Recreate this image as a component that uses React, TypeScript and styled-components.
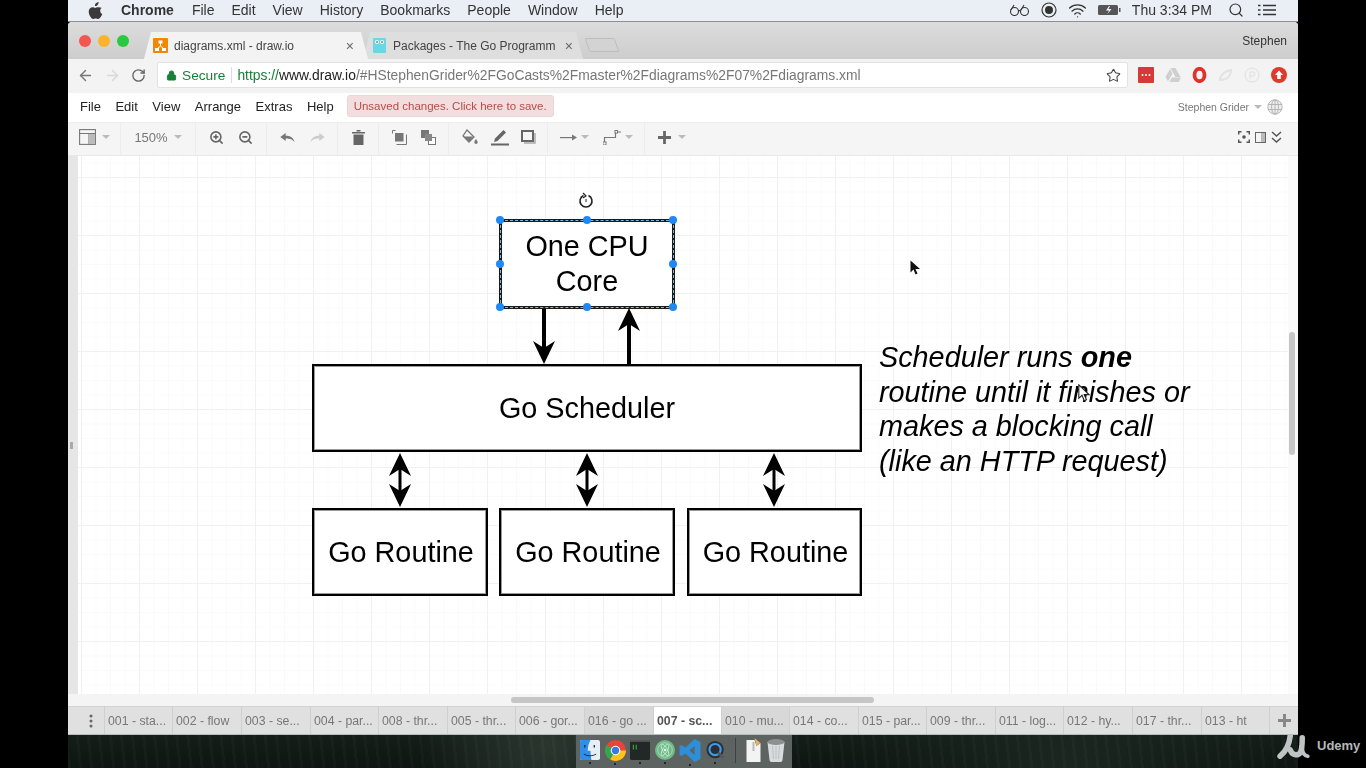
import React from "react";
import styled, { createGlobalStyle } from "styled-components";
import { ArrowLeft, ArrowRight, Lock, RotateCw, Search, Star, Wifi, ZoomIn, ZoomOut } from "lucide-react";

const SANS = `"Liberation Sans", Arial, sans-serif`;

const MENU_ITEMS = ["File", "Edit", "View", "History", "Bookmarks", "People", "Window", "Help"];
const APP_MENU = ["File", "Edit", "View", "Arrange", "Extras", "Help"];
const SHEETS = [
  { label: "001 - sta...", width: 68 },
  { label: "002 - flow", width: 69 },
  { label: "003 - se...", width: 69 },
  { label: "004 - par...", width: 68 },
  { label: "008 - thr...", width: 69 },
  { label: "005 - thr...", width: 68 },
  { label: "006 - gor...", width: 69 },
  { label: "016 - go ...", width: 69, shade: true },
  { label: "007 - sc...", width: 68, active: true },
  { label: "010 - mu...", width: 68, shade: true },
  { label: "014 - co...", width: 69 },
  { label: "015 - par...", width: 68 },
  { label: "009 - thr...", width: 69 },
  { label: "011 - log...", width: 68 },
  { label: "012 - hy...", width: 69 },
  { label: "017 - thr...", width: 69 },
  { label: "013 - ht", width: 68 },
];

const Caret = () => <CaretMark />;

const Arrow = ({ x, y1, y2, weight = 4 }: { x: number; y1: number; y2: number; weight?: number }) => {
  // tip sits on y2, the head always points from y1 towards y2
  const dir = y2 > y1 ? 1 : -1;
  const back = y2 - dir * 23;
  const notch = y2 - dir * 16;
  return (
    <g>
      <line x1={x} y1={y1} x2={x} y2={notch} stroke="#000" strokeWidth={weight} />
      <path d={`M${x} ${y2}L${x - 11} ${back}L${x} ${notch}L${x + 11} ${back}Z`} fill="#000" />
    </g>
  );
};

const App: React.FC = () => {
  return (
    <Screen>
      <GlobalStyle />
      <Frame>
        <MenuBar>
          <svg width="15" height="17" viewBox="0 0 15 17" fill="#3a3a3a">
            <path d="M10.6 0c.1 1.100-.3 2.100-1 2.900-.7.800-1.700 1.300-2.700 1.200-.1-1 .4-2.100 1-2.800C8.600.6 9.700.1 10.600 0zM13.900 5.800c-1.100.7-1.700 1.700-1.700 3 0 1.400.8 2.600 2.100 3.200-.4 1.100-.9 2.100-1.600 3.100-.8 1.100-1.500 1.900-2.500 1.900s-1.400-.6-2.600-.6c-1.200 0-1.600.6-2.500.6-1 0-1.700-.9-2.500-2C1.500 13.500.7 11.600.7 9.800c0-3 2-4.600 3.900-4.600 1 0 1.900.7 2.600.7.600 0 1.600-.7 2.700-.7 1.500 0 2.900.6 4 .6z" />
          </svg>
          <AppName>Chrome</AppName>
          <MenuList>
            {MENU_ITEMS.map((item) => (
              <span key={item}>{item}</span>
            ))}
          </MenuList>
          <StatusArea>
            <svg width="21" height="12" viewBox="0 0 21 12" fill="none" stroke="#333" strokeWidth="1.100">
              <circle cx="5.500" cy="7.500" r="4" />
              <circle cx="15.500" cy="7.500" r="4" />
              <path d="M9.500 7q1-1 2 0M2 6l3-5M12 6l3-5" />
            </svg>
            <svg width="16" height="16" viewBox="0 0 16 16">
              <circle cx="8" cy="8" r="7" fill="none" stroke="#333" strokeWidth="1.200" />
              <circle cx="8" cy="8" r="4" fill="#333" />
            </svg>
            <Wifi size={19} color="#333" strokeWidth={1.600} />
            <svg width="23" height="12" viewBox="0 0 23 12">
              <rect x="0" y="1" width="20" height="10" rx="1.500" fill="#555" />
              <rect x="21" y="4" width="1.500" height="4" fill="#555" />
              <path d="M11 2l-3 4.500h3L9.500 10l4-5h-3L12 2z" fill="#eef2f6" />
            </svg>
            <Clock>Thu 3:34 PM</Clock>
            <SpotlightIcon size={16} color="#333" strokeWidth={1.800} />
            <svg width="18" height="12" viewBox="0 0 18 12" stroke="#333" strokeWidth="1.500">
              <path d="M5 1.500h13M5 6h13M5 10.500h13M0 1.500h2.500M0 6h2.500M0 10.500h2.500" />
            </svg>
          </StatusArea>
        </MenuBar>

        <BrowserWindow>
          <TabStrip>
            <Traffic>
              <Light $color="#f5554f" />
              <Light $color="#fbb32e" />
              <Light $color="#28c840" />
            </Traffic>
            <BrowserTab $active>
              <svg width="15" height="15" viewBox="0 0 15 15">
                <rect width="15" height="15" rx="1" fill="#f08705" />
                <path d="M7.500 5v3M7.500 8L4 11M7.500 8l3.500 3" stroke="#fff" strokeWidth="1" fill="none" />
                <rect x="5.500" y="2.500" width="4" height="3" fill="#fff" />
                <rect x="2" y="10" width="4" height="3" fill="#fff" />
                <rect x="9" y="10" width="4" height="3" fill="#fff" />
              </svg>
              <TabTitle>diagrams.xml - draw.io</TabTitle>
              <TabClose>×</TabClose>
            </BrowserTab>
            <BrowserTab>
              <svg width="15" height="15" viewBox="0 0 15 15">
                <rect x="1" y="0" width="13" height="15" rx="1" fill="#6ad7e5" />
                <circle cx="5" cy="4" r="2" fill="#fff" />
                <circle cx="10" cy="4" r="2" fill="#fff" />
                <circle cx="5" cy="4" r="0.800" fill="#222" />
                <circle cx="10" cy="4" r="0.800" fill="#222" />
              </svg>
              <TabTitle>Packages - The Go Programm</TabTitle>
              <TabClose>×</TabClose>
            </BrowserTab>
            <NewTab />
            <ProfileName>Stephen</ProfileName>
          </TabStrip>

          <AddressRow>
            <NavButtons>
              <ArrowLeft size={17} color="#777" strokeWidth={2} />
              <ArrowRight size={17} color="#d8d8d8" strokeWidth={2} />
              <RotateCw size={15} color="#666" strokeWidth={2.200} />
            </NavButtons>
            <Omnibox>
              <Lock size={11} color="#188038" fill="#188038" />
              <SecureLabel>Secure</SecureLabel>
              <UrlDivider />
              <Url>
                <Scheme>https://</Scheme>
                <Host>www.draw.io</Host>
                /#HStephenGrider%2FGoCasts%2Fmaster%2Fdiagrams%2F07%2Fdiagrams.xml
              </Url>
              <Star size={15} color="#444" strokeWidth={1.700} />
            </Omnibox>
            <Extensions>
              <svg width="16" height="16" viewBox="0 0 16 16">
                <rect width="16" height="16" rx="1" fill="#d73a36" />
                <circle cx="4.500" cy="8" r="1" fill="#fff" />
                <circle cx="8" cy="8" r="1" fill="#fff" />
                <circle cx="11.500" cy="8" r="1" fill="#fff" />
              </svg>
              <svg width="16" height="14" viewBox="0 0 16 14">
                <path d="M5.500 0h5l5 9h-5zM5 1l2.500 4.500L3 13.500 0.500 9zM4.500 14l2.500-4.500h9L13.500 14z" fill="#cfcfcf" />
              </svg>
              <svg width="15" height="16" viewBox="0 0 15 16">
                <ellipse cx="7.500" cy="8" rx="5" ry="6.200" fill="none" stroke="#e0312e" strokeWidth="3.800" />
              </svg>
              <svg width="15" height="15" viewBox="0 0 15 15" fill="none" stroke="#e2e2e2" strokeWidth="2">
                <path d="M2 12C2 7 7 3 13 2 13 8 9 12 2 12z" />
              </svg>
              <svg width="16" height="16" viewBox="0 0 16 16" fill="none" stroke="#dedede" strokeWidth="1">
                <circle cx="8" cy="8" r="7" />
                <path d="M6 12V5h3a2 2 0 010 4H6" />
              </svg>
              <svg width="16" height="16" viewBox="0 0 16 16">
                <circle cx="8" cy="8" r="8" fill="#dd3b2c" />
                <path d="M8 3.500L12 8H9.800v4H6.200V8H4z" fill="#fff" />
              </svg>
            </Extensions>
          </AddressRow>

          <AppMenuRow>
            <AppMenuList>
              {APP_MENU.map((item) => (
                <span key={item}>{item}</span>
              ))}
            </AppMenuList>
            <SaveNotice>Unsaved changes. Click here to save.</SaveNotice>
            <UserBox>
              Stephen Grider
              <Caret />
              <svg width="16" height="16" viewBox="0 0 16 16" fill="#eee" stroke="#aaa" strokeWidth="0.800">
                <circle cx="8" cy="8" r="7.200" />
                <ellipse cx="8" cy="8" rx="3.500" ry="7.200" fill="none" />
                <path d="M1 5.500h14M1 10.500h14M8 1v14" fill="none" />
              </svg>
            </UserBox>
          </AppMenuRow>

          <ToolBar>
            <ToolGroup $width={53}>
              <svg width="17" height="16" viewBox="0 0 17 16" fill="none" stroke="#777" strokeWidth="1.100">
                <rect x="0.600" y="0.600" width="15.800" height="14.800" />
                <path d="M0.600 4.500h15.800M10 4.500v11" />
                <rect x="10" y="5" width="6" height="10" fill="#bbb" stroke="none" />
              </svg>
              <Caret />
            </ToolGroup>
            <ToolGroup $width={75}>
              <ZoomLabel>150%</ZoomLabel>
              <Caret />
            </ToolGroup>
            <ToolGroup $width={71} $gap={14}>
              <ZoomIn size={15} color="#666" strokeWidth={2.600} />
              <ZoomOut size={15} color="#666" strokeWidth={2.600} />
            </ToolGroup>
            <ToolGroup $width={71} $gap={15}>
              <svg width="15" height="9" viewBox="0 0 16 10" fill="#777">
                <path d="M0 4.500L6 0v3c5 0 8.500 2 10 7-2.500-3-5-4-10-4v3z" />
              </svg>
              <svg width="15" height="9" viewBox="0 0 16 10" fill="#ccc">
                <path d="M16 4.500L10 0v3C5 3 1.500 5 0 10c2.500-3 5-4 10-4v3z" />
              </svg>
            </ToolGroup>
            <ToolGroup $width={41}>
              <svg width="13" height="15" viewBox="0 0 13 15" fill="#666">
                <path d="M0 2h13v1.500H0zM4.500 0h4v1.500h-4zM1.500 4.500h10V15h-10z" />
              </svg>
            </ToolGroup>
            <ToolGroup $width={70} $gap={14}>
              <svg width="15" height="15" viewBox="0 0 15 15" fill="none" stroke="#777">
                <path d="M4.500 14.500h10V4.500M0.500 0.500h3M0.500 0.500v3" />
                <rect x="3" y="3" width="8.500" height="8.500" fill="#777" stroke="none" />
              </svg>
              <svg width="15" height="15" viewBox="0 0 15 15" fill="none" stroke="#777">
                <rect x="0.500" y="0.500" width="7" height="7" fill="#777" />
                <rect x="7.500" y="7.500" width="7" height="7" fill="#fff" />
                <rect x="4" y="4" width="7" height="7" fill="#888" stroke="none" />
              </svg>
            </ToolGroup>
            <ToolGroup $width={99} $gap={12}>
              <svg width="18" height="17" viewBox="0 0 18 17" fill="#777">
                <path d="M6 1l7 7-5 5-6-6z" fill="none" stroke="#777" strokeWidth="1.300" />
                <path d="M2.500 7.500h10L8 13zM15 10c1 1.500 1.700 2.300 1.700 3.200a1.700 1.700 0 01-3.400 0c0-.9.700-1.700 1.700-3.200z" />
              </svg>
              <svg width="18" height="17" viewBox="0 0 18 17">
                <path d="M12.500 1l2.500 2.500L6.500 12 3 13l1-3.500z" fill="#666" />
                <rect x="0" y="14.500" width="18" height="2" fill="#666" />
              </svg>
              <svg width="15" height="14" viewBox="0 0 15 14" fill="none">
                <rect x="1" y="1" width="11" height="10" stroke="#666" strokeWidth="2" />
                <path d="M14 3v10H3" stroke="#aaa" strokeWidth="1.500" />
              </svg>
            </ToolGroup>
            <ToolGroup $width={97} $gap={4}>
              <svg width="17" height="7" viewBox="0 0 17 7" fill="#777">
                <rect y="3" width="12" height="1.200" />
                <path d="M12 0.500l5 3-5 3z" />
              </svg>
              <Caret />
              <Spacer />
              <svg width="18" height="15" viewBox="0 0 18 15" fill="none" stroke="#777" strokeWidth="1.200">
                <path d="M1.500 13V7.500h11V2H18" />
                <rect x="0" y="12" width="3" height="3" fill="#fff" stroke="#777" strokeWidth="1" />
                <rect x="12" y="0.500" width="2.500" height="2.500" fill="#fff" stroke="#777" strokeWidth="1" />
              </svg>
              <Caret />
            </ToolGroup>
            <ToolGroup $width={54} $gap={7} $plain>
              <svg width="13" height="13" viewBox="0 0 14 14" fill="#666">
                <path d="M5.500 0h3v5.500H14v3H8.500V14h-3V8.500H0v-3h5.500z" />
              </svg>
              <Caret />
            </ToolGroup>
            <ToolEnd>
              <svg width="12" height="12" viewBox="0 0 12 12" fill="none" stroke="#555" strokeWidth="1.500">
                <path d="M0.700 3.500V.700h2.800M8.500.700h2.800v2.800M11.300 8.500v2.800H8.500M3.500 11.300H.700V8.500" />
                <circle cx="6" cy="6" r="1.800" fill="#555" stroke="none" />
              </svg>
              <svg width="11" height="11" viewBox="0 0 11 11" fill="none" stroke="#666">
                <rect x="0.500" y="0.500" width="10" height="10" />
                <rect x="6" y="1" width="4" height="9" fill="#bbb" stroke="none" />
              </svg>
              <svg width="11" height="12" viewBox="0 0 11 12" fill="none" stroke="#555" strokeWidth="1.500">
                <path d="M1 1l4.500 4L10 1M1 7l4.500 4L10 7" />
              </svg>
            </ToolEnd>
          </ToolBar>

          <Workspace>
            <Sash>
              <SashGrip />
            </Sash>
            <Canvas>
              <Connectors width="1210" height="537" viewBox="0 0 1210 537">
                <Arrow x={466} y1={152} y2={208} />
                <Arrow x={551} y1={208} y2={152} />
                {[322, 509, 696].map((x) => (
                  <g key={x}>
                    <Arrow x={x} y1={325} y2={297} weight={3} />
                    <Arrow x={x} y1={325} y2={351} weight={3} />
                  </g>
                ))}
              </Connectors>

              <Shape $x={421} $y={63} $w={176} $h={89} $lines>One CPU<br />Core</Shape>
              <Shape $x={234} $y={208} $w={550} $h={88}>Go Scheduler</Shape>
              <Shape $x={234} $y={352} $w={176} $h={88} $nudge={2}>Go Routine</Shape>
              <Shape $x={421} $y={352} $w={176} $h={88} $nudge={2}>Go Routine</Shape>
              <Shape $x={609} $y={352} $w={175} $h={88} $nudge={2}>Go Routine</Shape>

              <Selection />
              {[
                [422, 64], [508.500, 64], [595, 64],
                [422, 107.500], [595, 107.500],
                [422, 151], [508.500, 151], [595, 151],
              ].map(([x, y]) => (
                <Handle key={`${x}-${y}`} $x={x} $y={y} />
              ))}
              <RotateHandle>
                <svg width="16" height="17" viewBox="0 0 16 17" fill="none" stroke="#222" strokeWidth="1.600">
                  <path d="M5.500 3.600a6 6 0 105 0" />
                  <path d="M5 1l3 3-3 2" strokeWidth="1.200" />
                  <path d="M8 7v3" strokeWidth="1" />
                </svg>
              </RotateHandle>

              <Note>
                Scheduler runs <b>one</b><br />
                routine until it finishes or<br />
                makes a blocking call<br />
                (like an HTTP request)
              </Note>

              <Pointer $x={832} $y={104}>
                <svg width="11" height="16" viewBox="0 0 11 16">
                  <path d="M0.500 0.500v12l3-3 2 5 2-1-2-4.500h4.500z" fill="#111" />
                </svg>
              </Pointer>
              <Pointer $x={1000} $y={228}>
                <svg width="12" height="18" viewBox="0 0 12 18">
                  <path d="M0.800 0.800v13.500l3.200-3 2.300 5.500 2.200-1-2.300-5.200h4.800z" fill="#fff" stroke="#222" strokeWidth="1.100" />
                </svg>
              </Pointer>
            </Canvas>
            <VerticalRail>
              <VerticalThumb />
            </VerticalRail>
            <HorizontalThumb />
          </Workspace>

          <HorizontalRail />

          <SheetBar>
            <SheetMenu>
              <svg width="4" height="14" viewBox="0 0 4 14" fill="#666">
                <circle cx="2" cy="2" r="1.500" />
                <circle cx="2" cy="7" r="1.500" />
                <circle cx="2" cy="12" r="1.500" />
              </svg>
            </SheetMenu>
            {SHEETS.map((sheet) => (
              <Sheet key={sheet.label} $width={sheet.width} $active={sheet.active} $shade={sheet.shade}>
                {sheet.label}
              </Sheet>
            ))}
            <AddSheet>
              <svg width="13" height="13" viewBox="0 0 13 13" fill="#888">
                <path d="M5 0h3v5h5v3H8v5H5V8H0V5h5z" />
              </svg>
            </AddSheet>
          </SheetBar>
        </BrowserWindow>

        <Desktop>
          <Dock>
            <DockItem $running>
              <svg width="20" height="20" viewBox="0 0 21 24" preserveAspectRatio="none">
                <rect width="21" height="24" rx="2" fill="#e8eef5" />
                <path d="M2 0h9q-3 6-3 13h3q0 6 1 11H2a2 2 0 01-2-2V2a2 2 0 012-2z" fill="#2d8fe8" />
                <path d="M4 17q6.500 4 13 0" fill="none" stroke="#123" strokeWidth="1" />
                <path d="M5 6v3M15 6v3" stroke="#123" strokeWidth="1.300" />
              </svg>
            </DockItem>
            <DockItem $running>
              <svg width="21" height="21" viewBox="0 0 22 22">
                <circle cx="11" cy="11" r="11" fill="#e5453a" />
                <path d="M11 11L1.500 5.500A11 11 0 005.500 20.500z" fill="#2fa84f" />
                <path d="M11 11l-5.500 9.500A11 11 0 0022 11z" fill="#f9c51b" />
                <circle cx="11" cy="11" r="5" fill="#fff" />
                <circle cx="11" cy="11" r="3.800" fill="#3b78e7" />
              </svg>
            </DockItem>
            <DockItem $running>
              <svg width="20" height="20" viewBox="0 0 21 21">
                <rect width="21" height="21" rx="1.500" fill="#222825" />
                <rect width="21" height="2" fill="#555" />
                <path d="M3 5h1v5H3zM6 5h1v5H6z" fill="#35c24a" />
              </svg>
            </DockItem>
            <DockItem $running>
              <svg width="20" height="20" viewBox="0 0 22 22" fill="none">
                <circle cx="11" cy="11" r="11" fill="#6fbb88" />
                <circle cx="11" cy="11" r="8" stroke="#b6e0c4" strokeWidth="0.800" />
                <ellipse cx="11" cy="11" rx="7" ry="2.600" stroke="#d9f0e0" strokeWidth="0.800" transform="rotate(60 11 11)" />
                <ellipse cx="11" cy="11" rx="7" ry="2.600" stroke="#d9f0e0" strokeWidth="0.800" transform="rotate(-60 11 11)" />
                <circle cx="11" cy="11" r="1.400" fill="#e4f5e9" />
              </svg>
            </DockItem>
            <DockItem $running>
              <svg width="22" height="23" viewBox="0 0 21 23">
                <path d="M15 0l6 3v17l-6 3-9-8.500L2 17l-2-1V7l2-1 4 2.500zM15 7l-5 4.500 5 4.500z" fill="#2c8fd8" />
              </svg>
            </DockItem>
            <DockItem $running>
              <svg width="19" height="20" viewBox="0 0 22 22">
                <circle cx="10.500" cy="10.500" r="10" fill="#2b2f33" />
                <circle cx="10.500" cy="10.500" r="6.500" fill="none" stroke="#3d9be9" strokeWidth="2.500" />
                <path d="M14 14l6 6" stroke="#555" strokeWidth="3" />
              </svg>
            </DockItem>
            <DockDivider />
            <DockItem>
              <svg width="17" height="24" viewBox="0 0 16 24">
                <path d="M0 2h8l2 6 4-3v19H0z" fill="#f3f3f3" />
                <path d="M8 0l6 5-4 3z" fill="#e2b25f" />
                <rect x="6" y="4" width="2" height="9" fill="#bbb" />
              </svg>
            </DockItem>
            <DockItem>
              <svg width="18" height="23" viewBox="0 0 17 23">
                <path d="M0 3h17l-2 18a2 2 0 01-2 2H4a2 2 0 01-2-2z" fill="#d9dcdc" />
                <ellipse cx="8.500" cy="3" rx="8.500" ry="3" fill="#8d9291" />
                <path d="M5 7l1 13M8.500 7v13M12 7l-1 13" stroke="#b5b9b8" strokeWidth="0.800" />
              </svg>
            </DockItem>
          </Dock>
        </Desktop>
      </Frame>

      <UdemyMark>
        <svg width="34" height="24" viewBox="0 0 36 26" fill="none" stroke="#bfc3c3" strokeWidth="6">
          <path d="M15 1C14 10 10 18 4 23" strokeLinecap="round" />
          <path d="M15 16c2 6 8 7 11 3 1.500-3 2-9 2-16" strokeLinecap="round" />
          <path d="M28 14c0 5 2 8 6 9" strokeLinecap="round" strokeWidth="4" />
        </svg>
        <UdemyText>Udemy</UdemyText>
      </UdemyMark>
    </Screen>
  );
};

const GlobalStyle = createGlobalStyle`
  html, body {
    margin: 0;
    padding: 0;
    background: #000;
    overflow: hidden;
  }
  * {
    box-sizing: border-box;
  }
`;

const Screen = styled.div`
  position: relative;
  width: 1366px;
  height: 768px;
  background: #000;
  font-family: ${SANS};
  overflow: hidden;
  display: flex;
  justify-content: center;
`;

const Frame = styled.div`
  width: 1230px;
  height: 768px;
  display: flex;
  flex-direction: column;
  filter: blur(0.45px);
`;

const MenuBar = styled.div`
  height: 22px;
  flex: none;
  display: flex;
  align-items: center;
  padding: 0 22px 1px 20px;
  background: #e9eff5;
  border-bottom: 1px solid #8d8f91;
  color: #333;
  font-size: 14px;
`;

const AppName = styled.span`
  margin-left: 18px;
  font-weight: 700;
  color: #333;
`;

const MenuList = styled.div`
  display: flex;
  gap: 17px;
  margin-left: 18px;
`;

const StatusArea = styled.div`
  margin-left: auto;
  display: flex;
  align-items: center;
  gap: 11px;
`;

const Clock = styled.span`
  margin: 0 5px 0 0;
`;

const SpotlightIcon = styled(Search)`
  margin-right: 3px;
`;

const BrowserWindow = styled.div`
  height: 713px;
  flex: none;
  display: flex;
  flex-direction: column;
  border-radius: 4px 4px 0 0;
  overflow: hidden;
  background: #fff;
  border-bottom: 1px solid #bbb;
`;

const TabStrip = styled.div`
  height: 37px;
  flex: none;
  display: flex;
  align-items: flex-end;
  padding-right: 11px;
  background: linear-gradient(#dcdcdc, #cdcdcd);
`;

const Traffic = styled.div`
  display: flex;
  gap: 7px;
  align-self: center;
  padding-left: 11px;
  width: 80px;
`;

const Light = styled.span<{ $color: string }>`
  width: 12px;
  height: 12px;
  border-radius: 50%;
  background: ${(p) => p.$color};
`;

const BrowserTab = styled.div<{ $active?: boolean }>`
  position: relative;
  width: ${(p) => (p.$active ? 216 : 212)}px;
  height: 27px;
  margin-right: 3px;
  display: flex;
  align-items: center;
  gap: 6px;
  padding: 0 ${(p) => (p.$active ? 10 : 6)}px 0 5px;
  z-index: ${(p) => (p.$active ? 1 : 0)};

  &::before {
    content: "";
    position: absolute;
    inset: 0 -4px;
    z-index: -1;
    clip-path: polygon(0 100%, 7px 0, calc(100% - 7px) 0, 100% 100%);
    background: ${(p) => (p.$active ? "#f3f3f3" : "#dedede")};
  }
`;

const TabTitle = styled.span`
  flex: 1;
  font-size: 12px;
  color: #444;
  white-space: nowrap;
  overflow: hidden;
`;

const TabClose = styled.span`
  font-size: 14px;
  line-height: 1;
  color: #666;
`;

const NewTab = styled.div`
  width: 30px;
  height: 14px;
  margin: 0 0 7px 5px;
  background: #d3d3d3;
  border: 1px solid #bdbdbd;
  border-radius: 2px;
  transform: skewX(20deg);
`;

const ProfileName = styled.span`
  margin: 0 0 11px auto;
  font-size: 12px;
  color: #333;
`;

const AddressRow = styled.div`
  height: 34px;
  flex: none;
  display: flex;
  align-items: center;
  background: #f3f3f3;
  padding: 0 10px 2px 0;
`;

const NavButtons = styled.div`
  width: 89px;
  display: flex;
  align-items: center;
  gap: 10px;
  padding-left: 9px;
`;

const Omnibox = styled.div`
  width: 971px;
  height: 26px;
  display: flex;
  align-items: center;
  padding: 0 6px 0 8px;
  background: #fff;
  border: 1px solid #e2e2e2;
  border-radius: 2px;
  font-size: 13.700px;
`;

const SecureLabel = styled.span`
  margin-left: 5px;
  color: #188038;
`;

const UrlDivider = styled.span`
  width: 1px;
  height: 16px;
  margin: 0 5px 0 6px;
  background: #ddd;
`;

const Url = styled.span`
  flex: 1;
  font-size: 13.850px;
  color: #777;
  white-space: nowrap;
`;

const Scheme = styled.span`
  color: #188038;
`;

const Host = styled.span`
  color: #222;
`;

const Extensions = styled.div`
  display: flex;
  align-items: center;
  gap: 11px;
  margin-left: 10px;
`;

const AppMenuRow = styled.div`
  height: 29px;
  flex: none;
  display: flex;
  align-items: center;
  padding: 0 15px 2px 12px;
  background: #fff;
`;

const AppMenuList = styled.div`
  display: flex;
  gap: 14.500px;
  font-size: 13px;
  color: #222;
`;

const SaveNotice = styled.div`
  margin: -2px 0 0 13px;
  padding: 4px 6px;
  font-size: 11.500px;
  color: #b94a48;
  background: #f2dede;
  border: 1px solid #ebd5d5;
  border-radius: 3px;
`;

const UserBox = styled.div`
  margin-left: auto;
  display: flex;
  align-items: center;
  gap: 5px;
  font-size: 10.500px;
  color: #777;
`;

const ToolBar = styled.div`
  height: 34px;
  flex: none;
  display: flex;
  background: #f5f5f5;
  border-top: 1px solid #eee;
  border-bottom: 1px solid #e8e8e8;
`;

const ToolGroup = styled.div<{ $width: number; $gap?: number; $plain?: boolean }>`
  width: ${(p) => p.$width}px;
  display: flex;
  align-items: center;
  justify-content: center;
  gap: ${(p) => p.$gap ?? 6}px;
  padding-bottom: 4px;
  border-right: ${(p) => (p.$plain ? "0" : "1px solid #ececec")};
`;

const Spacer = styled.span`
  width: 6px;
`;

const ZoomLabel = styled.span`
  font-size: 13px;
  color: #777;
`;

const CaretMark = styled.span`
  width: 0;
  height: 0;
  border-left: 4px solid transparent;
  border-right: 4px solid transparent;
  border-top: 4px solid #bbb;
`;

const ToolEnd = styled.div`
  margin-left: auto;
  display: flex;
  align-items: center;
  gap: 5px;
  padding: 0 16px 4px 0;
`;

const Workspace = styled.div`
  position: relative;
  flex: 1;
  min-height: 0;
  display: flex;
`;

const Sash = styled.div`
  width: 10px;
  flex: none;
  display: flex;
  align-items: center;
  background: #e6e6e6;
`;

const SashGrip = styled.span`
  width: 3px;
  height: 7px;
  margin: 40px 0 0 2px;
  background: #aaa;
`;

const Canvas = styled.div`
  position: relative;
  flex: 1;
  overflow: hidden;
  background-color: #fff;
  background-image:
    linear-gradient(#f1f1f1 1px, transparent 1px),
    linear-gradient(90deg, #f1f1f1 1px, transparent 1px),
    linear-gradient(#fafafa 1px, transparent 1px),
    linear-gradient(90deg, #fafafa 1px, transparent 1px);
  background-size: 58px 58px, 58px 58px, 14.500px 14.500px, 14.500px 14.500px;
  background-position: 0 21px, 3px 0, 0 6.500px, 3px 0;
`;

const Connectors = styled.svg`
  position: absolute;
  left: 0;
  top: 0;
  z-index: 1;
`;

const Shape = styled.div<{ $x: number; $y: number; $w: number; $h: number; $lines?: boolean; $nudge?: number }>`
  position: absolute;
  left: ${(p) => p.$x}px;
  top: ${(p) => p.$y}px;
  width: ${(p) => p.$w}px;
  height: ${(p) => p.$h}px;
  display: flex;
  align-items: center;
  justify-content: center;
  padding-left: ${(p) => p.$nudge ?? 0}px;
  text-align: center;
  background: #fff;
  border: ${(p) => (p.$lines ? "0" : "2px solid #000")};
  box-shadow: inset 0 0 0 1px rgba(0, 0, 0, ${(p) => (p.$lines ? 0 : 0.4)});
  font-size: 28.800px;
  line-height: 34.500px;
  color: #000;
`;

const Selection = styled.div`
  position: absolute;
  left: 421px;
  top: 63px;
  width: 176px;
  height: 90px;
  border: 3px solid #1a1a1a;
  outline: 1px dashed #7fb8e0;
  outline-offset: -2px;
  z-index: 2;
`;

const Handle = styled.span<{ $x: number; $y: number }>`
  position: absolute;
  left: ${(p) => p.$x - 4}px;
  top: ${(p) => p.$y - 4}px;
  width: 8px;
  height: 8px;
  border-radius: 50%;
  background: #1f88f5;
  z-index: 3;
`;

const RotateHandle = styled.span`
  position: absolute;
  left: 500px;
  top: 36px;
  line-height: 0;
`;

const Note = styled.div`
  position: absolute;
  left: 801px;
  top: 184px;
  font-size: 28.800px;
  line-height: 34.500px;
  font-style: italic;
  white-space: nowrap;
  color: #000;
`;

const Pointer = styled.span<{ $x: number; $y: number }>`
  position: absolute;
  left: ${(p) => p.$x}px;
  top: ${(p) => p.$y}px;
  line-height: 0;
  z-index: 4;
`;

const VerticalRail = styled.div`
  width: 10px;
  flex: none;
  background: #fafafa;
  padding: 176px 1px 0 1px;
`;

const VerticalThumb = styled.div`
  width: 6px;
  height: 123px;
  border-radius: 3px;
  background: #c6c6c6;
`;

const HorizontalRail = styled.div`
  height: 12px;
  flex: none;
  background: #f4f4f4;
`;

const HorizontalThumb = styled.div`
  position: absolute;
  left: 443px;
  bottom: -9px;
  width: 363px;
  height: 6px;
  border-radius: 3px;
  background: #c6c6c6;
  z-index: 5;
`;

const SheetBar = styled.div`
  height: 28px;
  flex: none;
  display: flex;
  padding-left: 10px;
  background: #e0e0e0;
  border-top: 1px solid #d2d2d2;
`;

const SheetMenu = styled.div`
  width: 27px;
  display: flex;
  align-items: center;
  justify-content: center;
  border-right: 1px solid #cfcfcf;
`;

const Sheet = styled.div<{ $width: number; $active?: boolean; $shade?: boolean }>`
  width: ${(p) => p.$width}px;
  display: flex;
  align-items: center;
  padding-left: 3px;
  font-size: 12.300px;
  white-space: nowrap;
  overflow: hidden;
  color: ${(p) => (p.$active ? "#555" : "#777")};
  font-weight: ${(p) => (p.$active ? 700 : 400)};
  background: ${(p) => (p.$active ? "#fff" : p.$shade ? "#d8d8d8" : "#e0e0e0")};
  border-right: 1px solid #cfcfcf;
`;

const AddSheet = styled.div`
  flex: 1;
  display: flex;
  align-items: center;
  justify-content: center;
`;

const Desktop = styled.div`
  flex: 1;
  display: flex;
  justify-content: center;
  background:
    repeating-linear-gradient(84deg, rgba(255, 255, 255, 0.025) 0 3px, transparent 3px 11px),
    radial-gradient(circle at 480px 10px, #2b362f 0, transparent 130px),
    radial-gradient(circle at 1000px 20px, #1a261f 0, transparent 220px),
    linear-gradient(#141e19, #0e1512);
`;

const Dock = styled.div`
  width: 216px;
  height: 100%;
  margin-left: 2px;
  display: flex;
  align-items: center;
  gap: 4.500px;
  padding: 0 4px 3px 4px;
  background: #5d6360;
`;

const DockItem = styled.span<{ $running?: boolean }>`
  position: relative;
  line-height: 0;

  &::after {
    content: "";
    display: ${(p) => (p.$running ? "block" : "none")};
    position: absolute;
    left: calc(50% - 1px);
    bottom: -4px;
    width: 2px;
    height: 2px;
    border-radius: 50%;
    background: #111;
  }
`;

const DockDivider = styled.span`
  width: 1px;
  height: 25px;
  margin: 0 5px 0 6px;
  background: #3d4240;
`;

const UdemyMark = styled.div`
  position: absolute;
  left: 1276px;
  top: 735px;
  display: flex;
  align-items: center;
  gap: 7px;
`;

const UdemyText = styled.span`
  margin-top: -4px;
  font-size: 13px;
  font-weight: 700;
  color: #b5b9b9;
`;

export default App;
